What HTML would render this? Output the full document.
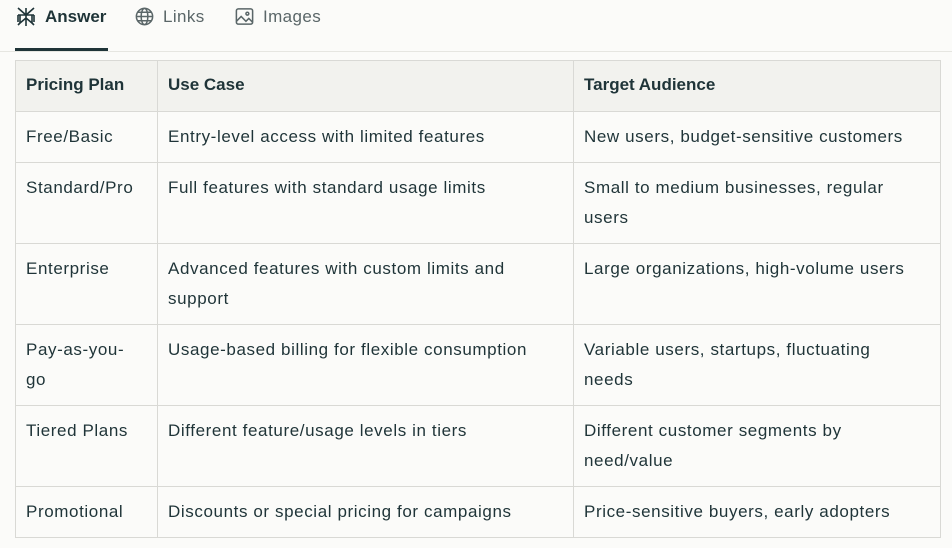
<!DOCTYPE html>
<html><head><meta charset="utf-8"><style>
body{margin:0;background:#fbfbf9;width:952px;height:548px;overflow:hidden;font-family:"Liberation Sans",Arial,sans-serif;color:#1f3438}
.tabs{position:absolute;left:0;top:0;width:952px;height:51px;border-bottom:1px solid #e6e6e1}
.tab{position:absolute;top:6px;font-size:17px;display:flex;align-items:center;gap:8px;color:#5a6668;letter-spacing:0.4px}
.tab.a{color:#1f3438;font-weight:bold;letter-spacing:0}
.ul{position:absolute;left:15px;top:48px;width:93px;height:3px;background:#1f3438}
table{position:absolute;left:15px;top:60px;border-collapse:collapse;width:925px;font-size:17px;table-layout:fixed;letter-spacing:0.6px}
td,th{border:1px solid #d9d9d5;vertical-align:top;text-align:left;padding:10px 11px 10px 10px;line-height:30px;white-space:nowrap;overflow:hidden}
th{background:#f2f2ee;font-weight:bold;padding:9px 11px 11px 10px;letter-spacing:0}
col.c1{width:142px}col.c2{width:416px}col.c3{width:367px}
</style></head><body>
<div class="tabs">
<div class="tab a" style="left:15px"><svg width="22" height="22" viewBox="0 0 22 22" fill="none" stroke="#1f3438" stroke-width="1.6"><path d="M3 2l8 7 8-7M11 2v18M3 9h16M5 9v8l6-5 6 5V9M5 17l-2 2M17 17l2 2M3 9v7M19 9v7"/></svg>Answer</div>
<div class="tab" style="left:134px"><svg width="21" height="21" viewBox="0 0 22 22" fill="none" stroke="#5a6668" stroke-width="1.6"><circle cx="11" cy="11" r="8.5"/><ellipse cx="11" cy="11" rx="3.5" ry="8.5"/><path d="M2.5 11h17M4 6.5h14M4 15.5h14"/></svg>Links</div>
<div class="tab" style="left:234px"><svg width="21" height="21" viewBox="0 0 22 22" fill="none" stroke="#5a6668" stroke-width="1.6"><rect x="2.5" y="3" width="17" height="16" rx="2"/><path d="M2.5 16l5-5 5 5 3-3 4 4"/><circle cx="14" cy="8" r="1.5"/></svg>Images</div>
</div>
<div class="ul"></div>
<table>
<colgroup><col class="c1"><col class="c2"><col class="c3"></colgroup>
<tr><th>Pricing Plan</th><th>Use Case</th><th>Target Audience</th></tr>
<tr><td>Free/Basic</td><td>Entry-level access with limited features</td><td>New users, budget-sensitive customers</td></tr>
<tr><td>Standard/Pro</td><td>Full features with standard usage limits</td><td>Small to medium businesses, regular<br>users</td></tr>
<tr><td>Enterprise</td><td>Advanced features with custom limits and<br>support</td><td>Large organizations, high-volume users</td></tr>
<tr><td>Pay-as-you-<br>go</td><td>Usage-based billing for flexible consumption</td><td>Variable users, startups, fluctuating<br>needs</td></tr>
<tr><td>Tiered Plans</td><td>Different feature/usage levels in tiers</td><td>Different customer segments by<br>need/value</td></tr>
<tr><td>Promotional</td><td>Discounts or special pricing for campaigns</td><td>Price-sensitive buyers, early adopters</td></tr>
</table>
</body></html>
